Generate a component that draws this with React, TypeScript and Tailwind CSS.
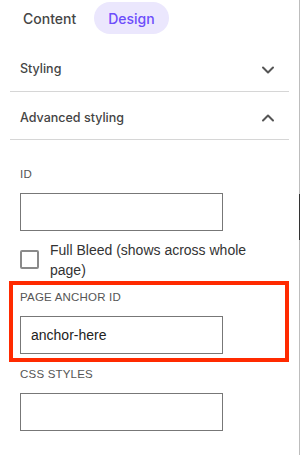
import { ChevronDown, ChevronUp } from "lucide-react";

function Field({ label, value }: { label: string; value?: string }) {
  return (
    <div className="flex flex-col">
      <span className="text-[11.5px] leading-[16px] tracking-[0.2px] text-[#555]">{label}</span>
      <div className="mt-[11px] w-[203px] h-[38px] border border-[#777] flex items-center px-[10px] text-[14px] text-[#222]">
        {value}
      </div>
    </div>
  );
}

export default function App() {
  return (
    <div className="w-[300px] h-[455px] bg-white flex overflow-hidden font-['Liberation_Sans',Arial,sans-serif]">
      <div className="w-[299px] flex flex-col">
        {/* Tabs */}
        <div className="h-[48px] pl-[10px] pt-[2px] flex items-start font-['Inter','Noto_Sans',sans-serif]">
          <button className="h-[32px] px-[13px] text-[14px] font-medium text-[#454545]">Content</button>
          <button className="ml-[5px] h-[32px] px-[14px] rounded-full bg-[#ebe7fd] text-[14px] font-medium text-[#6c4dfb]">
            Design
          </button>
        </div>

        {/* Accordion headers */}
        <div className="mx-[10px] w-[279px] font-['Inter','Noto_Sans',sans-serif]">
          <div className="h-[44px] pl-[10px] pr-[11px] flex items-center justify-between border-b border-[#d6d6d6] text-[12.5px] font-medium text-[#444]">
            <span>Styling</span>
            <ChevronDown size={20} strokeWidth={2.4} className="text-[#555]" />
          </div>
          <div className="h-[48px] pt-[5px] pl-[10px] pr-[11px] flex items-center justify-between border-b border-[#d6d6d6] text-[12.5px] font-medium text-[#444]">
            <span>Advanced styling</span>
            <ChevronUp size={20} strokeWidth={2.4} className="text-[#555]" />
          </div>
        </div>

        {/* Advanced fields */}
        <div className="px-[20px] pt-[26px] flex flex-col">
          <Field label="ID" />

          <div className="mt-[9px] flex items-start">
            <div className="mt-[10px] w-[19px] h-[19px] shrink-0 border-2 border-[#8a8a8a] rounded-[2px]" />
            <span className="ml-[11px] text-[14px] leading-[20px] text-[#333]">
              Full Bleed (shows across whole page)
            </span>
          </div>

          <div className="mt-[1px] -ml-[11px] w-[280px] border-4 border-[#ff2a00] pl-[7px] pt-[4px] pb-[4px]">
            <Field label="PAGE ANCHOR ID" value="anchor-here" />
          </div>

          <div className="mt-[4px]">
            <Field label="CSS STYLES" />
          </div>
        </div>
      </div>

      {/* Right edge */}
      <div className="w-[1px] h-full bg-[#bdbdbd] flex flex-col">
        <div className="mt-[194px] h-[46px] bg-[#333]" />
      </div>
    </div>
  );
}
